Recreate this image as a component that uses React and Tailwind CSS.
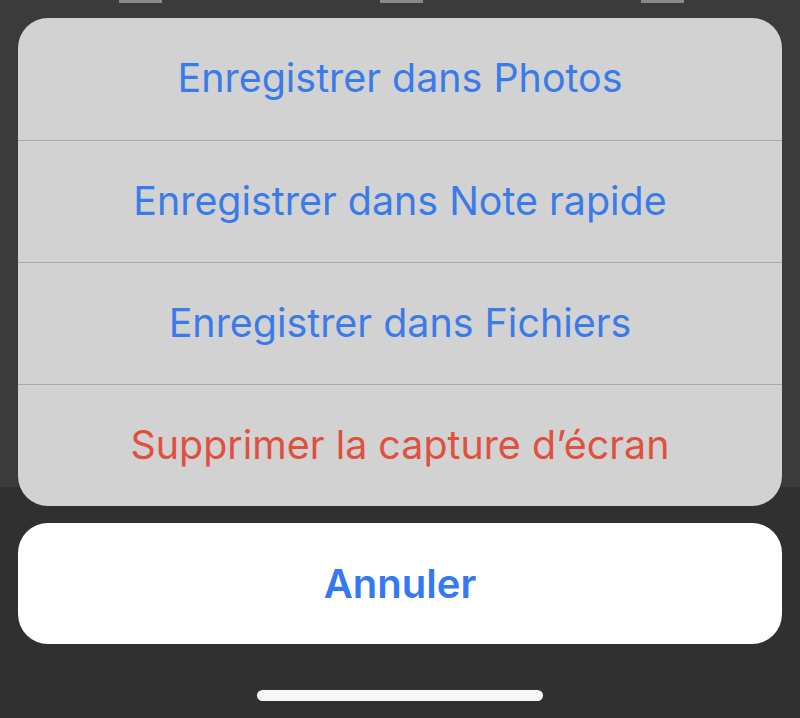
import React from 'react';

const actions = [
  { label: 'Enregistrer dans Photos', danger: false },
  { label: 'Enregistrer dans Note rapide', danger: false },
  { label: 'Enregistrer dans Fichiers', danger: false },
  { label: 'Supprimer la capture d’écran', danger: true },
];

export default function App() {
  return (
    <div
      className="w-full h-[718px] overflow-hidden flex flex-col bg-[linear-gradient(to_bottom,#3b3b3b_487px,#303030_487px)]"
      style={{ fontFamily: 'Inter, "Noto Sans", sans-serif' }}
    >
      {/* bits of the screenshot peeking above the sheet */}
      <div className="h-[18px] flex pl-[119px] gap-[218px]">
        <div className="w-[43px] h-[3px] bg-[#8a8a8a]" />
        <div className="w-[43px] h-[3px] bg-[#8a8a8a]" />
        <div className="w-[43px] h-[3px] bg-[#8a8a8a]" />
      </div>

      <div className="mx-[18px] rounded-[30px] bg-[#d2d2d2] overflow-hidden flex flex-col">
        {actions.map((a, i) => (
          <div
            key={i}
            className={`h-[122px] flex items-center justify-center text-[39.4px] ${
              a.danger ? 'text-[#e0503e]' : 'text-[#3a7bea]'
            } ${i > 0 ? 'border-t border-[#a9a9a9]' : ''}`}
          >
            {a.label}
          </div>
        ))}
      </div>

      <div className="mx-[18px] mt-[17px] h-[121px] rounded-[30px] bg-white flex items-center justify-center text-[40px] font-semibold text-[#3478f6]">
        Annuler
      </div>

      <div className="mt-[46px] mx-auto w-[286px] h-[11px] rounded-full bg-[#f7f7f7]" />
    </div>
  );
}
